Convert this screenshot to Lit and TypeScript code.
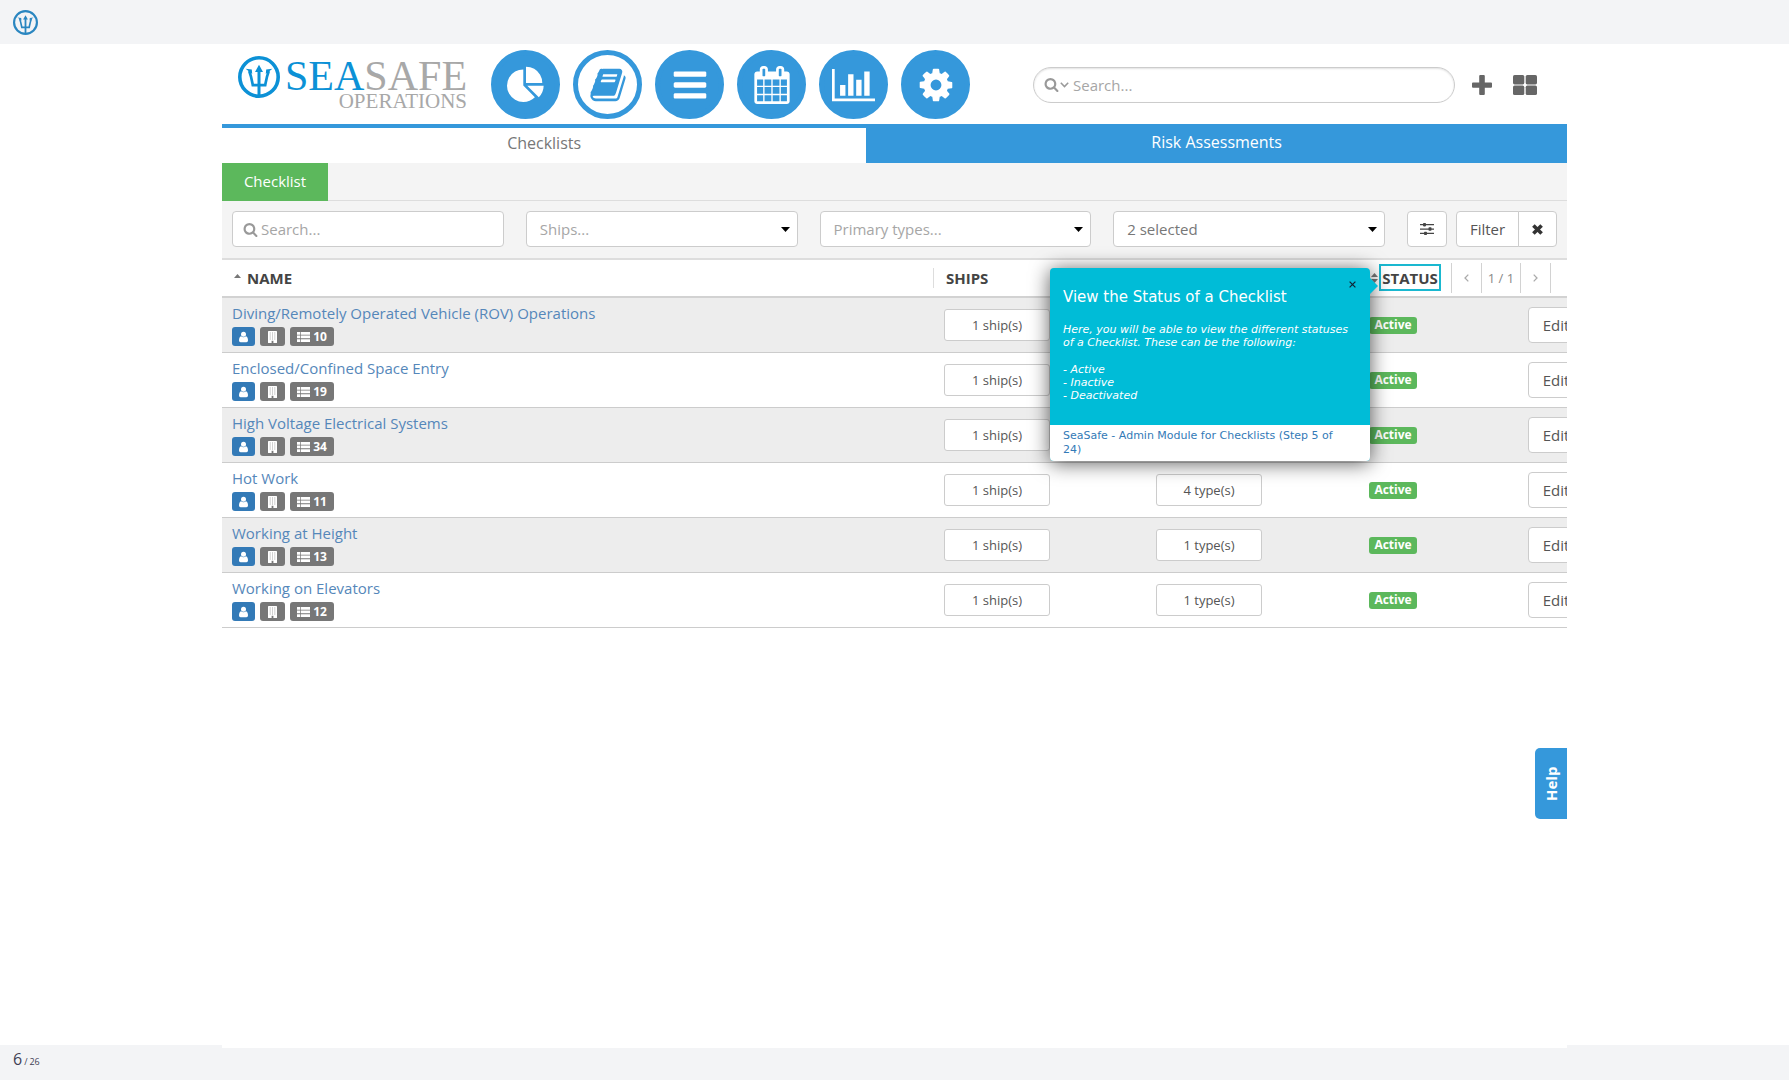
import { LitElement, html, css, svg } from "lit";
import { customElement } from "lit/decorators.js";
import { classMap } from "lit/directives/class-map.js";

const bar = (y: number) => `M1664 ${y}v128q0 26-19 45t-45 19h-1408q-26 0-45-19t-19-45v-128q0-26 19-45t45-19h1408q26 0 45 19t19 45z`;

const paths = {
  pie: "M768 890l546 546q-106 108-247.5 168t-298.5 60q-209 0-385.5-103t-279.5-279.5-103-385.5 103-385.5 279.5-279.5 385.5-103v762zm187 6h773q0 157-60 298.5t-168 247.5zm709-128h-768v-768q209 0 385.5 103t279.5 279.5 103 385.5z",
  book: "M1703 478q40 57 18 129l-275 906q-19 64-76.5 107.5t-122.5 43.5h-923q-77 0-148.5-53.5t-99.5-131.5q-24-67-2-127 0-4 3-27t4-37q1-8-3-21.5t-3-19.5q2-11 8-21t16.5-23.5 16.5-23.5q23-38 45-91.5t30-91.5q3-10 .5-30t-.5-28q3-11 17-28t17-23q21-36 42-92t25-90q1-9-2.5-32t.5-28q4-13 22-30.5t22-22.5q19-26 42.5-84.5t27.5-96.5q1-8-3-25.5t-2-26.5q2-8 9-18t18-23 17-21q8-12 16.5-30.5t15-35 16-36 19.5-32 26.5-23.5 36-11.5 47.5 5.5l-1 3q38-9 51-9h761q74 0 114 56t18 130l-274 906q-36 119-71.5 153.5t-128.5 34.5h-869q-27 0-38 15-11 16-1 43 24 70 144 70h923q29 0 56-15.5t35-41.5l300-987q7-22 5-57 38 15 59 43zm-1064 2q-4 13 2 22.5t20 9.5h608q13 0 25.5-9.5t16.5-22.5l21-64q4-13-2-22.5t-20-9.5h-608q-13 0-25.5 9.5t-16.5 22.5zm-83 256q-4 13 2 22.5t20 9.5h608q13 0 25.5-9.5t16.5-22.5l21-64q4-13-2-22.5t-20-9.5h-608q-13 0-25.5 9.5t-16.5 22.5z",
  bars: bar(1344) + bar(832) + bar(320),
  calendar: "M192 1664h288v-288h-288v288zm352 0h320v-288h-320v288zm-352-352h288v-320h-288v320zm352 0h320v-320h-320v320zm-352-384h288v-288h-288v288zm736 736h320v-288h-320v288zm-384-736h320v-288h-320v288zm768 736h288v-288h-288v288zm-384-352h320v-320h-320v320zm-352-864v-288q0-13-9.5-22.5t-22.5-9.5h-64q-13 0-22.5 9.5t-9.5 22.5v288q0 13 9.5 22.5t22.5 9.5h64q13 0 22.5-9.5t9.5-22.5zm736 864h288v-320h-288v320zm-384-384h320v-288h-320v288zm384 0h288v-288h-288v288zm32-480v-288q0-13-9.5-22.5t-22.5-9.5h-64q-13 0-22.5 9.5t-9.5 22.5v288q0 13 9.5 22.5t22.5 9.5h64q13 0 22.5-9.5t9.5-22.5zm384-64v1280q0 52-38 90t-90 38h-1408q-52 0-90-38t-38-90v-1280q0-52 38-90t90-38h128v-96q0-66 47-113t113-47h64q66 0 113 47t47 113v96h384v-96q0-66 47-113t113-47h64q66 0 113 47t47 113v96h128q52 0 90 38t38 90z",
  chart: "M640 896v512h-256v-512h256zm384-512v1024h-256v-1024h256zm1024 1152v128h-2048v-1536h128v1408h1920zm-640-896v768h-256v-768h256zm384-384v1152h-256v-1152h256z",
  cog: "M1152 896q0-106-75-181t-181-75-181 75-75 181 75 181 181 75 181-75 75-181zm512-109v222q0 12-8 23t-20 13l-185 28q-19 54-39 91 35 50 107 138 10 12 10 25t-9 23q-27 37-99 108t-94 71q-12 0-26-9l-138-108q-44 23-91 38-16 136-29 186-7 28-36 28h-222q-14 0-24.5-8.5t-11.5-21.5l-28-184q-49-16-90-37l-141 107q-10 9-25 9-14 0-25-11-126-114-165-168-7-10-7-23 0-12 8-23 15-21 51-66.5t54-70.5q-27-50-41-99l-183-27q-13-2-21-12.5t-8-23.5v-222q0-12 8-23t19-13l186-28q14-46 39-92-40-57-107-138-10-12-10-24 0-10 9-23 26-36 98.5-107.5t94.5-71.5q13 0 26 10l138 107q44-23 91-38 16-136 29-186 7-28 36-28h222q14 0 24.5 8.5t11.5 21.5l28 184q49 16 90 37l142-107q9-9 24-9 13 0 25 10 129 119 165 170 7 8 7 22 0 12-8 23-15 21-51 66.5t-54 70.5q26 50 41 98l183 28q13 2 21 12.5t8 23.5z",
  search: "M1216 832q0-185-131.5-316.5t-316.5-131.5-316.5 131.5-131.5 316.5 131.5 316.5 316.5 131.5 316.5-131.5 131.5-316.5zm512 832q0 52-38 90t-90 38q-54 0-90-38l-343-342q-179 124-399 124-143 0-273.5-55.5t-225-150-150-225-55.5-273.5 55.5-273.5 150-225 225-150 273.5-55.5 273.5 55.5 225 150 150 225 55.5 273.5q0 220-124 399l343 343q37 37 37 90z",
};

const glyph = (d: string, cls: string, box = "0 0 1792 1792") => html`
  <svg class=${cls} viewBox=${box} fill="currentColor" aria-hidden="true"><path d=${d} /></svg>`;

const emblem = (cls: string) => html`
  <svg class=${cls} viewBox="0 0 42 42" aria-hidden="true">
    <circle cx="21" cy="21" r="19.2" fill="none" stroke="currentColor" stroke-width="3.6" />
    <path d="M19.500 39V16H17L21 8.800 25 16h-2.500v23z" fill="currentColor" />
    <path d="M11.200 15C13.200 20 13.800 24 14.800 29.200H27.200C28.200 24 28.800 20 30.800 15" fill="none" stroke="currentColor" stroke-width="2.700" />
    <path d="M7.600 12.800l6.200 .6 .4 4.600zM34.400 12.800l-6.200 .6-.4 4.600z" fill="currentColor" />
  </svg>`;

const caret = (cls: string, d: string, box: string) => html`
  <svg class=${cls} viewBox=${box} aria-hidden="true"><path d=${d} fill="currentColor" /></svg>`;

const sections = [
  { label: "Dashboard", d: paths.pie, box: "0 -32 1792 1792" },
  { label: "Checklists", d: paths.book, box: "0 0 1792 1792", active: true },
  { label: "Lists", d: paths.bars, box: "0 0 1792 1792" },
  { label: "Calendar", d: paths.calendar, box: "0 0 1792 1792" },
  { label: "Reports", d: paths.chart, box: "0 0 2048 1792", wide: true },
  { label: "Settings", d: paths.cog, box: "0 0 1792 1792" },
];

const checklists = [
  { name: "Diving/Remotely Operated Vehicle (ROV) Operations", items: 10, ships: 1, types: 1 },
  { name: "Enclosed/Confined Space Entry", items: 19, ships: 1, types: 1 },
  { name: "High Voltage Electrical Systems", items: 34, ships: 1, types: 1 },
  { name: "Hot Work", items: 11, ships: 1, types: 4 },
  { name: "Working at Height", items: 13, ships: 1, types: 1 },
  { name: "Working on Elevators", items: 12, ships: 1, types: 1 },
];

@customElement("app-root")
export class AppRoot extends LitElement {
  static styles = css`
    :host {
      display: flex;
      flex-direction: column;
      min-height: 100vh;
      background: #fff;
      color: #555;
      font: 15px/22px "Open Sans", "Noto Sans", sans-serif;
    }
    *, *::before, *::after { box-sizing: border-box; }
    a { color: inherit; text-decoration: none; }
    button, input, select { font: inherit; color: inherit; margin: 0; }
    button { cursor: pointer; padding: 0; }
    svg { display: block; flex: none; }

    .topbar { height: 44px; flex: none; padding: 10px 13px; background: #f3f4f6; color: #2a86c0; }
    .topbar-mark { width: 25px; height: 25px; }
    .stage {
      position: relative;
      z-index: 1;
      flex: 1;
      margin: 0 222px -3px;
      background: #fff;
      overflow: hidden;
    }
    .footer {
      flex: none;
      display: flex;
      align-items: baseline;
      gap: 2px;
      height: 35px;
      padding: 3px 13px;
      background: #f3f4f6;
      color: #3f3f54;
    }
    .current { font-size: 16px; }
    .total { font-size: 9px; }

    .header { display: flex; align-items: center; height: 80px; padding: 1px 30px 0 16px; }
    .logo { display: flex; gap: 5px; width: 227px; height: 58px; margin-right: 26px; color: #0c91d6; font-family: "Liberation Serif", serif; }
    .logo-mark { width: 42px; height: 42px; }
    .logo-text { display: flex; flex-direction: column; align-items: flex-end; }
    .brand { font-size: 42px; line-height: 40px; }
    .grey { color: #a8a8a8; }
    .product { font-size: 21px; line-height: 11px; color: #a8a8a8; }
    .sections { display: flex; gap: 13px; }
    .section {
      display: flex;
      align-items: center;
      justify-content: center;
      width: 69px;
      height: 69px;
      border-radius: 50%;
      border: 5px solid #3598db;
      background: #3598db;
      color: #fff;
    }
    .section.active { background: #fff; color: #3598db; }
    .section-icon { width: 38px; height: 38px; }
    .section-icon.wide { width: 43px; }
    .global-search {
      display: flex;
      align-items: center;
      flex: 1;
      min-width: 0;
      height: 36px;
      margin: 0 17px 0 63px;
      padding: 0 10px;
      border: 1px solid #ccc;
      border-radius: 18px;
      box-shadow: inset 0 1px 2px #e2e2e2;
      color: #999;
    }
    .lens { width: 15px; height: 15px; }
    .scope { width: 9px; height: 6px; margin: 0 4px 0 1px; }
    .field { flex: 1; min-width: 0; border: 0; padding: 0; outline: 0; background: none; color: #555; }
    .field::placeholder { color: #a6a6a6; opacity: 1; }
    .plain { border: 0; background: none; color: #666; }
    .plus { width: 20px; height: 20px; margin-right: 21px; }
    .tiles { width: 24px; height: 20px; }

    .tabs { display: flex; height: 39px; border-top: 4px solid #3598db; font-size: 16px; text-align: center; color: #777; }
    .tab { flex: 479; padding-top: 4px; }
    .tab.filled { flex: 521; padding-top: 3px; background: #3598db; color: #fff; }
    .subtabs { display: flex; height: 38px; border-bottom: 1px solid #ddd; background: #f4f4f4; }
    .subtab { width: 106px; height: 38px; padding-top: 7px; text-align: center; background: #5cb85c; color: #fff; }

    .filters {
      display: grid;
      grid-template-columns: repeat(4, minmax(0, 1fr)) auto;
      gap: 22px;
      padding: 10px 10px 11px;
      background: #f4f4f4;
      border-bottom: 2px solid #ddd;
    }
    .control {
      display: flex;
      align-items: center;
      height: 36px;
      border: 1px solid #ccc;
      border-radius: 4px;
      background: #fff;
    }
    .control.search { padding: 0 10px; gap: 3px; color: #999; }
    .picker { position: relative; }
    .select { appearance: none; width: 100%; height: 34px; padding: 0 13px; border: 0; outline: 0; background: none; color: #a6a6a6; }
    .select.chosen { color: #777; }
    .arrow { position: absolute; right: 7px; width: 9px; height: 5px; color: #000; pointer-events: none; }
    .actions { display: flex; gap: 9px; }
    .button {
      display: flex;
      align-items: center;
      justify-content: center;
      height: 36px;
      border: 1px solid #ccc;
      border-radius: 4px;
      background: #fff;
      color: #555;
    }
    .options { width: 40px; }
    .options-icon { width: 14px; height: 14px; color: #444; }
    .group { display: flex; }
    .apply { width: 63px; border-radius: 4px 0 0 4px; }
    .clear { width: 39px; margin-left: -1px; border-radius: 0 4px 4px 0; }
    .clear-icon { width: 11px; height: 11px; color: #333; }

    .table { width: 100%; table-layout: fixed; border-collapse: separate; border-spacing: 0; }
    .col-ships { width: 212px; }
    .col-types { width: 213px; }
    .col-status { width: 159px; }
    .col-edit { width: 49px; }
    .head th { height: 38px; padding: 0 10px 1px; border-bottom: 2px solid #d2d2d2; text-align: left; font-weight: 700; color: #444; vertical-align: middle; }
    .label { display: flex; align-items: center; gap: 6px; }
    .label.divided { height: 20px; margin-left: -11px; padding-left: 12px; border-left: 1px solid #ddd; }
    .sort-up { width: 7px; height: 8px; margin-left: 2px; color: #777; }
    .sort-both { width: 7px; height: 10px; margin-left: 2px; color: #777; }
    .status-head { display: flex; align-items: center; }
    .target { height: 27px; width: 62px; margin-left: 1px; line-height: 24px; text-align: center; border: 2px solid #1ab8d0; }
    .pager { display: flex; margin-left: 10px; height: 30px; font-weight: 400; color: #888; font-size: 13px; }
    .step { display: flex; align-items: center; justify-content: center; width: 30px; border: 0; border-left: 1px solid #d2d2d2; background: none; color: #aaa; }
    .step.next { width: 31px; border-right: 1px solid #d2d2d2; }
    .chevron { width: 5px; height: 8px; }
    .page { display: flex; align-items: center; justify-content: center; width: 39px; border-left: 1px solid #d2d2d2; }
    .row td { height: 55px; padding: 0 10px; border-bottom: 1px solid #ccc; vertical-align: middle; }
    .row:nth-child(odd) td { background: #ededed; }
    .entry { display: flex; flex-direction: column; gap: 3px; padding-bottom: 2px; color: #5587ba; }
    .badges { display: flex; gap: 5px; }
    .badge { display: flex; align-items: center; justify-content: center; gap: 3px; height: 19px; width: 25px; border-radius: 3px; background: #777; color: #fff; font-size: 12px; font-weight: 700; }
    .badge.owner { width: 23px; background: #337ab7; }
    .badge.count { width: 44px; }
    .badge-icon { width: 9px; height: 12px; }
    .list-icon { width: 13px; height: 10px; }
    .small { width: 106px; height: 32px; border-radius: 3px; font-size: 13px; }
    .state { display: block; width: 48px; height: 17px; border-radius: 3px; background: #5cb85c; color: #fff; font-size: 12px; line-height: 16px; font-weight: 700; text-align: center; }
    .edit { width: 56px; }

    .tour {
      position: absolute;
      top: 224px;
      right: 197px;
      width: 320px;
      border-radius: 4px;
      background: #00bcd7;
      color: #fff;
      font: 11px/13px "DejaVu Sans", sans-serif;
      box-shadow: 0 2px 20px rgba(0, 0, 0, 0.65);
    }
    .tour::after {
      content: "";
      position: absolute;
      left: 100%;
      top: 10px;
      border: 8px solid transparent;
      border-left-color: #00bcd7;
      border-right: 0;
    }
    .tour-body { display: flex; flex-direction: column; gap: 14px; height: 157px; padding: 19px 13px 0; font-style: italic; }
    .tour-title { margin: 0 0 2px; font: 15px/20px "DejaVu Sans", sans-serif; }
    .tour-text { margin: 0; }
    .tour-list { margin: 0; padding: 0; list-style: none; }
    .tour-close { position: absolute; top: 10px; right: 12px; width: 12px; height: 12px; border: 0; background: none; color: #123; }
    .close-icon { width: 7px; height: 7px; margin: auto; }
    .tour-foot { padding: 4px 30px 4px 13px; line-height: 14px; border-radius: 0 0 4px 4px; background: #fff; color: #337ab7; }

    .help {
      position: absolute;
      top: 704px;
      right: 0;
      width: 32px;
      height: 71px;
      border: 0;
      border-radius: 0 5px 5px 0;
      background: #3598db;
      color: #fff;
      font-weight: 700;
      writing-mode: vertical-rl;
      transform: rotate(180deg);
    }
  `;

  private renderHeader() {
    return html`
      <header class="header">
        <a class="logo" href="#home">
          ${emblem("logo-mark")}
          <span class="logo-text">
            <span class="brand">SEA<span class="grey">SAFE</span></span>
            <span class="product">OPERATIONS</span>
          </span>
        </a>
        <nav class="sections">
          ${sections.map((s) => html`
            <a class=${classMap({ section: true, active: !!s.active })} href="#${s.label.toLowerCase()}" aria-label=${s.label}>
              ${glyph(s.d, s.wide ? "section-icon wide" : "section-icon", s.box)}
            </a>`)}
        </nav>
        <label class="global-search">
          ${glyph(paths.search, "lens")}
          <svg class="scope" viewBox="0 0 9 6" fill="none" stroke="currentColor" stroke-width="1.5" aria-hidden="true"><path d="M.8 .8l3.7 3.8L8.2 .8" /></svg>
          <input class="field" type="text" placeholder="Search..." aria-label="Search everything" />
        </label>
        <button class="plain" aria-label="Add">
          <svg class="plus" viewBox="0 0 20 20" aria-hidden="true"><path d="M8.2 0h3.6q1 0 1 1v6.4H19q1 0 1 1v3.4q0 1-1 1h-6.2V19q0 1-1 1H8.2q-1 0-1-1v-6.2H1q-1 0-1-1V8.400q0-1 1-1h6.200V1q0-1 1-1z" fill="currentColor" /></svg>
        </button>
        <button class="plain" aria-label="Modules">
          <svg class="tiles" viewBox="0 0 24 20" fill="currentColor" aria-hidden="true">
            ${[0, 12.7].map((x) => [0, 10.6].map((y) => svg`<rect x=${x} y=${y} width="11.3" height="9.4" rx="1.6" />`))}
          </svg>
        </button>
      </header>`;
  }

  private renderPicker(label: string, text: string, chosen = false) {
    return html`
      <div class="control picker">
        <select class=${classMap({ select: true, chosen })} aria-label=${label}><option>${text}</option></select>
        ${caret("arrow", "M0 0h9L4.500 5z", "0 0 9 5")}
      </div>`;
  }

  private renderFilters() {
    return html`
      <form class="filters" @submit=${(e: Event) => e.preventDefault()}>
        <label class="control search">
          ${glyph(paths.search, "lens")}
          <input class="field" type="text" placeholder="Search..." aria-label="Search checklists" />
        </label>
        ${this.renderPicker("Ships", "Ships...")}
        ${this.renderPicker("Primary types", "Primary types...")}
        ${this.renderPicker("Statuses", "2 selected", true)}
        <div class="actions">
          <button class="button options" type="button" aria-label="Options">
            <svg class="options-icon" viewBox="0 0 14 14" fill="currentColor" aria-hidden="true">
              <path d="M0 2h14v1.300H0zM0 6.400h14v1.300H0zM0 10.800h14v1.300H0z" />
              <rect x="3" y="1" width="3" height="3.400" rx=".8" />
              <rect x="8.500" y="5.300" width="3" height="3.400" rx=".8" />
              <rect x="4" y="9.700" width="3" height="3.400" rx=".8" />
            </svg>
          </button>
          <div class="group">
            <button class="button apply" type="submit">Filter</button>
            <button class="button clear" type="reset" aria-label="Clear filter">
              <svg class="clear-icon" viewBox="0 0 11 11" stroke="currentColor" stroke-width="3.600" aria-hidden="true"><path d="M1.400 1.400l8.200 8.200M9.600 1.400L1.400 9.600" /></svg>
            </button>
          </div>
        </div>
      </form>`;
  }

  private renderTable() {
    const chevron = (d: string) => html`
      <svg class="chevron" viewBox="0 0 5 8" fill="none" stroke="currentColor" stroke-width="1.300" aria-hidden="true"><path d=${d} /></svg>`;
    return html`
      <table class="table">
        <colgroup><col /><col class="col-ships" /><col class="col-types" /><col class="col-status" /><col class="col-edit" /></colgroup>
        <thead>
          <tr class="head">
            <th scope="col"><span class="label">${caret("sort-up", "M0 4h7L3.500 0z", "0 0 7 8")}NAME</span></th>
            <th scope="col"><span class="label divided">SHIPS</span></th>
            <th scope="col"></th>
            <th scope="col" colspan="2">
              <div class="status-head">
                ${caret("sort-both", "M0 4h7L3.500 0zM0 6h7L3.500 10z", "0 0 7 10")}
                <span class="target">STATUS</span>
                <div class="pager">
                  <button class="step" aria-label="Previous page">${chevron("M4.300 .6L1 4l3.300 3.400")}</button>
                  <span class="page">1 / 1</span>
                  <button class="step next" aria-label="Next page">${chevron("M.7 .6L4 4 .7 7.400")}</button>
                </div>
              </div>
            </th>
          </tr>
        </thead>
        <tbody>
          ${checklists.map((c) => html`
            <tr class="row">
              <td>
                <div class="entry">
                  <a href="#checklist">${c.name}</a>
                  <div class="badges">
                    <span class="badge owner">
                      <svg class="badge-icon" viewBox="0 0 9 12" fill="currentColor" aria-hidden="true"><circle cx="4.500" cy="3.300" r="2.500" /><path d="M2 5.200Q0 6 0 9.600q0 1.600 1.600 1.600h5.800Q9 11.200 9 9.600 9 6 7 5.200 4.500 7.400 2 5.200z" /></svg>
                    </span>
                    <span class="badge">
                      <svg class="badge-icon" viewBox="0 0 9 12" aria-hidden="true">
                        <rect width="9" height="12" rx=".6" fill="#fff" />
                        <path d="M2.200 1.500v7M4.500 1.500v7M6.800 1.500v7" stroke="#999" stroke-width=".9" stroke-dasharray="1 1" />
                        <path d="M3.600 9.800h1.800V12H3.600z" fill="#777" />
                      </svg>
                    </span>
                    <span class="badge count">
                      <svg class="list-icon" viewBox="0 0 13 10" fill="currentColor" aria-hidden="true"><path d="M0 0h3.300v2.700H0zM4 0h9v2.700H4zM0 3.600h3.300v2.700H0zM4 3.600h9v2.700H4zM0 7.200h3.300v2.700H0zM4 7.200h9v2.700H4z" /></svg>
                      ${c.items}
                    </span>
                  </div>
                </div>
              </td>
              <td><button class="button small">${c.ships} ship(s)</button></td>
              <td><button class="button small">${c.types} type(s)</button></td>
              <td><span class="state">Active</span></td>
              <td><button class="button edit">Edit</button></td>
            </tr>`)}
        </tbody>
      </table>`;
  }

  private renderTour() {
    return html`
      <section class="tour" role="dialog" aria-labelledby="tour-title">
        <div class="tour-body">
          <h2 class="tour-title" id="tour-title">View the Status of a Checklist</h2>
          <p class="tour-text">Here, you will be able to view the different statuses of a Checklist. These can be the following:</p>
          <ul class="tour-list"><li>- Active</li><li>- Inactive</li><li>- Deactivated</li></ul>
        </div>
        <button class="tour-close" aria-label="Close">
          <svg class="close-icon" viewBox="0 0 7 7" stroke="currentColor" stroke-width="1.200" aria-hidden="true"><path d="M.6 .6l5.800 5.800M6.400 .6L.6 6.400" /></svg>
        </button>
        <div class="tour-foot">SeaSafe - Admin Module for Checklists (Step 5 of 24)</div>
      </section>`;
  }

  render() {
    return html`
      <div class="topbar">${emblem("topbar-mark")}</div>
      <main class="stage">
        ${this.renderHeader()}
        <nav class="tabs">
          <a class="tab" href="#checklists">Checklists</a>
          <a class="tab filled" href="#risk">Risk Assessments</a>
        </nav>
        <nav class="subtabs"><a class="subtab" href="#checklist">Checklist</a></nav>
        ${this.renderFilters()}
        ${this.renderTable()}
        ${this.renderTour()}
        <button class="help">Help</button>
      </main>
      <footer class="footer">
        <span class="current">6</span><span class="total">/</span><span class="total">26</span>
      </footer>`;
  }
}
